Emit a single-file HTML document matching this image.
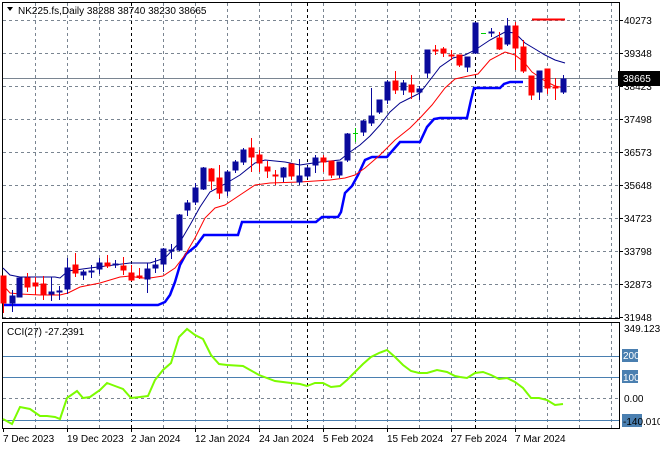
<!DOCTYPE html>
<html><head><meta charset="utf-8"><style>
html,body{margin:0;padding:0;background:#fff;}
svg{display:block;font-family:"Liberation Sans",sans-serif;font-size:10px;}
</style></head><body>
<svg width="660" height="450" viewBox="0 0 660 450" xmlns="http://www.w3.org/2000/svg">
<rect width="660" height="450" fill="#fff"/>
<!-- grid verticals -->
<g stroke="#7a8591" stroke-width="1" stroke-dasharray="3,3">
<path d="M35.5 3V318M67.5 3V318M99.5 3V318M163.5 3V318M195.5 3V318M227.5 3V318M259.5 3V318M291.5 3V318M323.5 3V318M355.5 3V318M387.5 3V318M419.5 3V318M451.5 3V318M515.5 3V318M547.5 3V318M579.5 3V318M611.5 3V318"/>
<path d="M35.5 323V428M67.5 323V428M99.5 323V428M163.5 323V428M195.5 323V428M227.5 323V428M259.5 323V428M291.5 323V428M323.5 323V428M355.5 323V428M387.5 323V428M419.5 323V428M451.5 323V428M515.5 323V428M547.5 323V428M579.5 323V428M611.5 323V428"/>
<path d="M3 20.5H619M3 53.5H619M3 86.5H619M3 119.5H619M3 152.5H619M3 185.5H619M3 218.5H619M3 251.5H619M3 284.5H619M3 317.5H619"/>
<path d="M3 398.5H619"/>
</g>
<g stroke="#000" stroke-width="1" stroke-dasharray="3,3">
<path d="M131.5 3V318M307.5 3V318M475.5 3V318M131.5 323V428M307.5 323V428M475.5 323V428"/>
</g>
<!-- CCI levels -->
<g stroke="#4a7fb0" stroke-width="1">
<path d="M3 356.5H619M3 377.5H619M3 420.5H619"/>
</g>
<!-- price line -->
<path d="M3 78.5H619" stroke="#7a8591" stroke-width="1"/>
<!-- borders -->
<g stroke="#000" stroke-width="1" fill="none">
<rect x="2.5" y="2.5" width="617" height="316"/>
<rect x="2.5" y="322.5" width="617" height="106"/>
</g>
<!-- thick blue line -->
<polyline fill="none" stroke="#0000ff" stroke-width="2.5" points="3,305 158,305 165,302 170,295 175,282 180,265 186,254 196,246 204,235 238,235 242,222 316,222 322,217 338,217 341,212 345,193 352,186 358,175 365,160 372,157 387,157 393,150 400,142 420,142 427,127 434,119 440,118 467,118 471,100 474,88 500,88 504,84 510,82 523,82"/>
<!-- red MA -->
<polyline fill="none" stroke="#ff0000" stroke-width="1" points="3,285 10,293 20,294 40,295 60,295 68,293 80,287 100,283 120,277 130,276 140,278 150,278 163,276 175,268 185,255 195,238 205,218 215,208 225,205 240,195 255,185 270,183 300,182 330,180 345,178 355,175 365,168 380,155 395,140 410,128 420,118 432,105 445,88 455,79 468,76 478,74 490,60 505,52 515,55 524,62 532,72 545,81 555,86 565,88"/>
<!-- blue MA -->
<polyline fill="none" stroke="#00008b" stroke-width="1" points="3,268 10,275 20,277 40,277 55,277 60,278 68,271 90,268 130,263 150,263 165,258 180,242 190,225 200,207 210,192 225,184 240,175 255,163 265,160 285,162 300,165 320,162 340,160 350,152 360,145 370,136 380,125 390,112 400,103 410,98 420,93 430,80 440,67 453,58 465,55 475,50 490,40 505,32 515,33 525,43 535,49 545,55 555,60 565,63"/>
<!-- red hline -->
<path d="M532 19.5H565" stroke="#ff0000" stroke-width="2"/>
<!-- candles -->
<g id="c"></g>
<g stroke-width="1">
<g stroke="#ff0000" fill="#ff0000">
<path d="M3.5 276V313M27.5 273V292M35.5 277V295M43.5 276V300M75.5 253V277M107.5 255V268M123.5 257V275M131.5 265V281M139.5 268V279M211.5 168V190M219.5 165V199M251.5 138V172M259.5 150V172M267.5 161V178M275.5 170V185M291.5 164V180M323.5 155V172M331.5 161V178M395.5 71V94M411.5 75V99M435.5 45V55M443.5 47V57M451.5 50V60M459.5 55V67M499.5 32V50M515.5 22V70M523.5 40V73M531.5 76V100M547.5 69V94M555.5 78V100"/>
<rect x="1" y="276" width="5" height="27"/><rect x="25" y="278" width="5" height="9"/><rect x="33" y="283" width="5" height="3"/><rect x="41" y="284" width="5" height="11"/><rect x="73" y="265" width="5" height="8"/><rect x="105" y="263" width="5" height="3"/><rect x="121" y="266" width="5" height="4"/><rect x="129" y="273" width="5" height="7"/><rect x="137" y="276" width="5" height="1"/><rect x="209" y="169" width="5" height="12"/><rect x="217" y="178" width="5" height="15"/><rect x="249" y="148" width="5" height="9"/><rect x="257" y="155" width="5" height="8"/><rect x="265" y="167" width="5" height="4"/><rect x="273" y="175" width="5" height="1"/><rect x="289" y="164" width="5" height="12"/><rect x="321" y="158" width="5" height="4"/><rect x="329" y="161" width="5" height="14"/><rect x="393" y="81" width="5" height="9"/><rect x="409" y="85" width="5" height="7"/><rect x="433" y="50" width="5" height="1"/><rect x="441" y="49" width="5" height="4"/><rect x="449" y="55" width="5" height="1"/><rect x="457" y="55" width="5" height="10"/><rect x="497" y="38" width="5" height="11"/><rect x="513" y="26" width="5" height="22"/><rect x="521" y="47" width="5" height="24"/><rect x="529" y="76" width="5" height="19"/><rect x="545" y="69" width="5" height="19"/><rect x="553" y="87" width="5" height="1"/>
</g>
<g stroke="#0a0a9c" fill="#0a0a9c">
<path d="M12.5 290V312M19.5 278V297M51.5 277V301M59.5 286V300M67.5 258V294M83.5 270V280M91.5 265V278M99.5 258V274M115.5 260V268M147.5 263V293M155.5 258V273M163.5 248V272M171.5 244V259M179.5 214V251M187.5 200V216M195.5 183V205M203.5 167V190M227.5 170V196M235.5 160V173M243.5 148V165M283.5 167V182M299.5 159V185M307.5 166V178M315.5 155V173M339.5 162V178M347.5 133V162M363.5 120V136M371.5 88V126M379.5 100V114M387.5 80V104M403.5 80V95M419.5 86V100M427.5 50V78M467.5 57V72M475.5 22V54M491.5 28V37M507.5 18V46M539.5 71V100M563.5 75V94"/>
<rect x="10" y="296" width="5" height="7"/><rect x="17" y="278" width="5" height="19"/><rect x="49" y="292" width="5" height="2"/><rect x="57" y="291" width="5" height="1"/><rect x="65" y="268" width="5" height="21"/><rect x="81" y="272" width="5" height="3"/><rect x="89" y="271" width="5" height="1"/><rect x="97" y="263" width="5" height="6"/><rect x="113" y="264" width="5" height="1"/><rect x="145" y="269" width="5" height="10"/><rect x="153" y="265" width="5" height="3"/><rect x="161" y="249" width="5" height="15"/><rect x="169" y="250" width="5" height="1"/><rect x="177" y="215" width="5" height="35"/><rect x="185" y="203" width="5" height="7"/><rect x="193" y="188" width="5" height="14"/><rect x="201" y="168" width="5" height="21"/><rect x="225" y="172" width="5" height="19"/><rect x="233" y="162" width="5" height="8"/><rect x="241" y="150" width="5" height="12"/><rect x="281" y="168" width="5" height="9"/><rect x="297" y="176" width="5" height="6"/><rect x="305" y="168" width="5" height="8"/><rect x="313" y="158" width="5" height="7"/><rect x="337" y="162" width="5" height="13"/><rect x="345" y="134" width="5" height="26"/><rect x="361" y="121" width="5" height="11"/><rect x="369" y="116" width="5" height="7"/><rect x="377" y="100" width="5" height="12"/><rect x="385" y="82" width="5" height="18"/><rect x="401" y="83" width="5" height="7"/><rect x="417" y="89" width="5" height="3"/><rect x="425" y="50" width="5" height="23"/><rect x="465" y="57" width="5" height="10"/><rect x="473" y="23" width="5" height="30"/><rect x="489" y="32" width="5" height="1"/><rect x="505" y="26" width="5" height="18"/><rect x="537" y="71" width="5" height="21"/><rect x="561" y="79" width="5" height="13"/>
</g>
<g stroke="#00cc00">
<path d="M355.5 128V142M353 133.5H358M481 33.5H486"/>
</g>
</g>
<!-- CCI line -->
<polyline fill="none" stroke="#7cfc00" stroke-width="2" points="3,419 12,424 20,407 30,409 40,416 47,416 55,417 60,419 67,398 77,391 83,398 90,397 100,390 107,383 115,386 123,389 131,398 140,397 148,396 155,380 163,370 171,363 179,337 187,329 195,335 203,339 211,355 219,364 227,365 243,366 259,375 275,381 291,383 300,384 307,386 315,383 323,383 331,387 340,386 347,380 355,372 363,364 371,357 379,353 387,350 395,357 403,365 411,371 419,373 427,373 437,370 447,372 455,376 460,377 467,378 475,373 483,372 491,375 499,379 507,378 515,382 523,388 531,398 539,398 547,400 555,405 563,404"/>
<!-- title -->
<path d="M7 7H13L10 11Z" fill="#000"/>
<text x="18" y="14" fill="#000">NK225.fs,Daily  38288 38740 38230 38665</text>
<text x="7" y="335" fill="#000">CCI(27) -27.2391</text>
<!-- right axis -->
<g stroke="#000"><path d="M619 20.5H623M619 53.5H623M619 86.5H623M619 119.5H623M619 152.5H623M619 185.5H623M619 218.5H623M619 251.5H623M619 284.5H623M619 317.5H623"/></g>
<g fill="#000">
<text x="624" y="24">40273</text><text x="624" y="57">39348</text><text x="624" y="90">38423</text><text x="624" y="123">37498</text><text x="624" y="156">36573</text><text x="624" y="189">35648</text><text x="624" y="222">34723</text><text x="624" y="255">33798</text><text x="624" y="288">32873</text><text x="624" y="321">31948</text>
<text x="624" y="332">349.1237</text><text x="624" y="402">0.00</text>
</g>
<rect x="618" y="71" width="42" height="15" fill="#000"/>
<text x="623" y="82" fill="#fff">38665</text>
<rect x="622" y="349" width="16" height="13" fill="#4a7fb0"/><text x="623" y="359" fill="#fff">200</text>
<rect x="622" y="370" width="16" height="13" fill="#4a7fb0"/><text x="623" y="381" fill="#fff">100</text>
<rect x="622" y="414" width="20" height="13" fill="#4a7fb0"/><text x="623" y="425" fill="#000">-140.010</text>
<!-- date axis -->
<g stroke="#000"><path d="M3.5 428V432M67.5 428V432M131.5 428V432M195.5 428V432M259.5 428V432M323.5 428V432M387.5 428V432M451.5 428V432M515.5 428V432"/></g>
<g fill="#000">
<text x="3" y="442">7 Dec 2023</text><text x="67" y="442">19 Dec 2023</text><text x="131" y="442">2 Jan 2024</text><text x="195" y="442">12 Jan 2024</text><text x="259" y="442">24 Jan 2024</text><text x="323" y="442">5 Feb 2024</text><text x="387" y="442">15 Feb 2024</text><text x="451" y="442">27 Feb 2024</text><text x="515" y="442">7 Mar 2024</text>
</g>
</svg>
</body></html>
